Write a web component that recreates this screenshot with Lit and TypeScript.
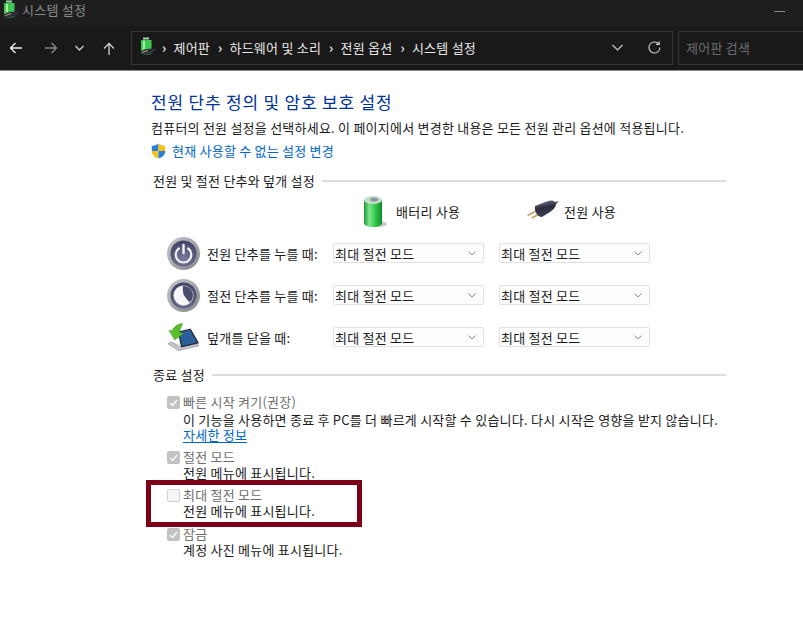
import { LitElement, css, html, svg } from 'lit'
import { customElement } from 'lit/decorators.js'

const batteryIcon = (w: number, h: number) => html`
  <svg width=${w} height=${h} viewBox="0 0 24 33">
    <defs>
      <linearGradient id="bat" x1="0" x2="1" y1="0" y2="0">
        <stop offset="0" stop-color="#1f9a35" />
        <stop offset="0.3" stop-color="#7fe58c" />
        <stop offset="0.65" stop-color="#2cc648" />
        <stop offset="1" stop-color="#168a2c" />
      </linearGradient>
    </defs>
    <ellipse cx="15" cy="29" rx="9" ry="3" fill="#c9c9c9" />
    <path d="M1 5v23c0 2.500 4 4 9 4s9-1.500 9-4V5z" fill="url(#bat)" />
    <ellipse cx="10" cy="5" rx="9" ry="4" fill="#c6dfca" />
    <ellipse cx="11" cy="4.500" rx="4" ry="2" fill="#8d97a5" />
  </svg>
`

const smallBattery = html`
  <svg width="18" height="20" viewBox="0 0 18 20">
    <rect x="4" y="0.500" width="6" height="2" fill="#9fd8a4" />
    <path d="M2 3h10.500v13c0 2-10.500 2-10.500 0z" fill="#3fc84f" />
    <path d="M4 4h2v11H4z" fill="#a4f0a8" />
    <path d="M1 15c3-3 8-4 14-3l2-2-1 4c-3 3-9 4-13 3z" fill="#2c2d3c" />
    <path d="M3 15.500l6-2" stroke="#c8a868" fill="none" />
  </svg>
`

const plugIcon = html`
  <svg width="32" height="22" viewBox="0 0 32 22">
    <defs>
      <linearGradient id="plug" x1="0" x2="0.300" y1="0" y2="1">
        <stop offset="0" stop-color="#7d8096" />
        <stop offset="0.5" stop-color="#2b2c3e" />
        <stop offset="1" stop-color="#3d3e52" />
      </linearGradient>
    </defs>
    <path d="M0.500 15.500l10-5M5 18l9-5" stroke="#c9a066" stroke-width="1.800" fill="none" />
    <path d="M8 6l13-5c3-1 6-.500 7 1L32 1l-3 3c0 3-3 6-6 8L15 17c-4 0-8-5-7-11z" fill="url(#plug)" />
  </svg>
`

const powerIcon = (inner: unknown) => html`
  <svg width="33" height="33" viewBox="0 0 33 33">
    <defs>
      <linearGradient id="ring" x1="0" x2="1" y1="0" y2="1">
        <stop offset="0" stop-color="#c9c9cc" />
        <stop offset="1" stop-color="#84848c" />
      </linearGradient>
      <radialGradient id="disc" cx="0.500" cy="0.700" r="0.700">
        <stop offset="0" stop-color="#7c7e9e" />
        <stop offset="1" stop-color="#3f4163" />
      </radialGradient>
    </defs>
    <circle cx="16.500" cy="16.500" r="16.500" fill="url(#ring)" />
    <circle cx="16.500" cy="16.500" r="13" fill="url(#disc)" />
    ${inner}
  </svg>
`

const powerGlyph = svg`
  <path d="M11.800 11.500a7.800 7.800 0 1 0 9.400 0" fill="none" stroke="#f4f4f8" stroke-width="2.200" stroke-linecap="round" />
  <path d="M16.500 8v8" stroke="#f4f4f8" stroke-width="2.400" stroke-linecap="round" />
`
const sleepGlyph = svg`
  <circle cx="16.500" cy="16.500" r="10" fill="#f6f6f8" />
  <path d="M16 7c5-.500 10 3.500 10 9 0 3-1.200 5.500-3.500 7.500C22 22 18 19 16.500 15 15.800 12 15.500 9.500 16 7z" fill="#4a4c70" />
`

const lidIcon = html`
  <svg width="34" height="31" viewBox="0 0 34 31">
    <path d="M1 22l11 7 21-5-3-2-16 3-10-5z" fill="#c4c6cc" stroke="#85878e" stroke-width="0.600" />
    <path d="M12 10l12-3 8 14-17 4z" fill="#2a5f9c" stroke="#23252f" stroke-width="1.300" stroke-linejoin="round" />
    <path d="M16 1c-5 .500-9 3-10.500 7.500L2 8l6 10 9-6.500-4-1.500c.500-3 2-6 3-9z" fill="#55c02c" stroke="#3a8f20" stroke-width="0.500" />
  </svg>
`

const shieldIcon = html`
  <svg width="15" height="16" viewBox="0 0 15 16">
    <path d="M7.500 0.500C5.500 2 3 2.800 0.800 2.800V8h6.700z" fill="#2a7fd6" />
    <path d="M7.500 0.500c2 1.500 4.500 2.300 6.700 2.300V8H7.500z" fill="#f5c21a" />
    <path d="M0.800 8h6.700v7.500C3.800 14.300 0.800 12 0.800 8z" fill="#f5c21a" />
    <path d="M7.500 8h6.700c0 4-3 6.300-6.700 7.500z" fill="#2a7fd6" />
  </svg>
`

const chevron = html`
  <svg class="chev" width="8" height="5" viewBox="0 0 8 5">
    <path d="M0.500 0.500l3.500 3.500 3.500-3.500" fill="none" stroke="#8a8a8a" />
  </svg>
`

@customElement('app-root')
export class AppRoot extends LitElement {
  private select() {
    return html`<div class="select"><span>최대 절전 모드</span>${chevron}</div>`
  }

  private row(icon: unknown, label: string) {
    return html`
      <div class="power-row">
        <div class="row-icon">${icon}</div>
        <div class="row-label">${label}</div>
        ${this.select()}${this.select()}
      </div>
    `
  }

  private option(title: string, desc: string, checked: boolean, more = false) {
    return html`
      <div class="option">
        <div class="check ${checked ? 'on' : ''}">
          ${checked
            ? html`<svg width="9" height="8" viewBox="0 0 9 8"><path d="M1 4l2.500 2.500L8 1" fill="none" stroke="#fff" stroke-width="1.200" /></svg>`
            : ''}
        </div>
        <div class="option-text">
          <div class="opt-title">${title}</div>
          <div class="opt-desc ${more ? 'long' : ''}">${desc}</div>
          ${more ? html`<a class="more">자세한 정보</a>` : ''}
        </div>
      </div>
    `
  }

  render() {
    return html`
      <header>
        <div class="titlebar">
          <span class="title-icon">${smallBattery}</span>
          <span class="title">시스템 설정</span>
          <span class="spacer"></span>
          <span class="minimize"></span>
        </div>
        <div class="navbar">
          <div class="nav-buttons">
            <svg width="14" height="12" viewBox="0 0 14 12"><path d="M13 6H1.500M6.500 1L1.500 6l5 5" fill="none" stroke="#f0f0f0" stroke-width="1.300" /></svg>
            <svg class="fwd" width="14" height="12" viewBox="0 0 14 12"><path d="M1 6h11.500M7.500 1l5 5-5 5" fill="none" stroke="#8b8b8b" stroke-width="1.300" /></svg>
            <svg class="down" width="9" height="6" viewBox="0 0 9 6"><path d="M0.500 1l4 4 4-4" fill="none" stroke="#d0d0d0" stroke-width="1.300" /></svg>
            <svg class="up" width="12" height="13" viewBox="0 0 12 13"><path d="M6 13V1.500M1 6.500l5-5 5 5" fill="none" stroke="#d0d0d0" stroke-width="1.300" /></svg>
          </div>
          <div class="address">
            <span class="addr-icon">${smallBattery}</span>
            <span class="sep first">›</span><span>제어판</span>
            <span class="sep">›</span><span>하드웨어 및 소리</span>
            <span class="sep">›</span><span>전원 옵션</span>
            <span class="sep">›</span><span>시스템 설정</span>
            <span class="spacer"></span>
            <svg class="addr-down" width="11" height="7" viewBox="0 0 11 7"><path d="M0.500 1l5 5 5-5" fill="none" stroke="#d0d0d0" stroke-width="1.100" /></svg>
            <svg class="refresh" width="13" height="13" viewBox="0 0 13 13"><path d="M10.800 3A5.500 5.500 0 1 0 12 6.500" fill="none" stroke="#d0d0d0" stroke-width="1.100" /><path d="M11.200 0.300V3.400H8" fill="none" stroke="#d0d0d0" stroke-width="1.100" /></svg>
          </div>
          <div class="search">제어판 검색</div>
        </div>
      </header>
      <main>
        <h1>전원 단추 정의 및 암호 보호 설정</h1>
        <p class="intro">컴퓨터의 전원 설정을 선택하세요. 이 페이지에서 변경한 내용은 모든 전원 관리 옵션에 적용됩니다.</p>
        <div class="uac">${shieldIcon}<a>현재 사용할 수 없는 설정 변경</a></div>
        <div class="group-head g1"><span>전원 및 절전 단추와 덮개 설정</span><i></i></div>
        <div class="col-heads">
          <div class="col-head bat">${batteryIcon(24, 33)}<span>배터리 사용</span></div>
          <div class="col-head plug">${plugIcon}<span>전원 사용</span></div>
        </div>
        <div class="rows">
          ${this.row(powerIcon(powerGlyph), '전원 단추를 누를 때:')}
          ${this.row(powerIcon(sleepGlyph), '절전 단추를 누를 때:')}
          ${this.row(lidIcon, '덮개를 닫을 때:')}
        </div>
        <div class="group-head g2"><span>종료 설정</span><i></i></div>
        <div class="options">
          ${this.option('빠른 시작 켜기(권장)', '이 기능을 사용하면 종료 후 PC를 더 빠르게 시작할 수 있습니다. 다시 시작은 영향을 받지 않습니다.', true, true)}
          ${this.option('절전 모드', '전원 메뉴에 표시됩니다.', true)}
          ${this.option('최대 절전 모드', '전원 메뉴에 표시됩니다.', false)}
          ${this.option('잠금', '계정 사진 메뉴에 표시됩니다.', true)}
        </div>
      </main>
      <div class="highlight"></div>
    `
  }

  static styles = css`
    :host {
      display: block;
      position: relative;
      height: 639px;
      overflow: hidden;
      background: #fff;
      color: #1a1a1a;
      font-family: 'Noto Sans CJK KR', sans-serif;
      font-size: 13px;
      letter-spacing: 0.23px;
    }
    header {
      background: #1a1a1a;
      border-bottom: 1px solid #8a8a8a;
    }
    .titlebar {
      display: flex;
      align-items: center;
      height: 26px;
      box-sizing: border-box;
      padding-bottom: 7px;
      background: #1e1e1e;
      color: #8a8a8a;
    }
    .title-icon {
      display: flex;
      margin: 0 2px 0 2px;
    }
    .spacer {
      flex: 1;
    }
    .minimize {
      width: 11px;
      height: 1px;
      background: #8a8a8a;
      margin: 3px 18px 0 0;
    }
    .navbar {
      display: flex;
      align-items: center;
      height: 44px;
      background: #191919;
    }
    .nav-buttons {
      display: flex;
      align-items: center;
      width: 131px;
      padding-left: 9px;
      box-sizing: border-box;
    }
    .fwd {
      margin-left: 21px;
    }
    .down {
      margin-left: 17px;
    }
    .up {
      margin-left: 19px;
    }
    .address {
      display: flex;
      align-items: center;
      width: 542px;
      height: 34px;
      box-sizing: border-box;
      border: 1px solid #363636;
      padding: 0 0 2px 7px;
      color: #e8e8e8;
      gap: 5px;
      white-space: nowrap;
    }
    .addr-icon {
      display: flex;
    }
    .sep {
      color: #e8e8e8;
      font-weight: 700;
      margin: 0 2px 0 3px;
    }
    .sep.first {
      margin-left: 0;
    }
    .addr-down {
      margin-right: 20px;
    }
    .refresh {
      margin-right: 11px;
    }
    .search {
      margin-left: 5px;
      flex: 1;
      height: 34px;
      box-sizing: border-box;
      border: 1px solid #363636;
      border-right: none;
      padding-left: 7px;
      line-height: 32px;
      color: #6e6e6e;
    }
    main {
      padding-left: 151px;
    }
    h1 {
      margin: 20px 0 0;
      font-size: 17px;
      line-height: 22px;
      font-weight: 400;
      color: #003399;
      letter-spacing: 0.8px;
    }
    .intro {
      margin: 6px 0 0;
      line-height: 18px;
      white-space: nowrap;
    }
    .uac {
      display: flex;
      align-items: center;
      gap: 6px;
      margin-top: 5px;
      line-height: 18px;
    }
    .uac a {
      color: #0066cc;
    }
    .group-head {
      display: flex;
      align-items: center;
      width: 575px;
      gap: 7px;
      padding-left: 2px;
      box-sizing: border-box;
      line-height: 18px;
    }
    .group-head i {
      flex: 1;
      height: 2px;
      background: #dcdcdc;
    }
    .g1 {
      margin-top: 12px;
    }
    .g2 {
      margin-top: 8px;
    }
    .col-heads {
      display: flex;
      align-items: center;
      height: 36px;
      margin-top: 3px;
      padding-left: 212px;
    }
    .col-head {
      display: flex;
      align-items: center;
    }
    .bat {
      width: 164px;
      gap: 9px;
    }
    .plug {
      gap: 5px;
    }
    .rows {
      margin-top: 3px;
    }
    .power-row {
      display: flex;
      align-items: center;
      height: 42px;
      padding-left: 16px;
    }
    .row-icon {
      display: flex;
      justify-content: center;
      width: 33px;
    }
    .row-label {
      width: 133px;
      padding-left: 7px;
      box-sizing: border-box;
      white-space: nowrap;
    }
    .select {
      display: flex;
      align-items: center;
      justify-content: space-between;
      width: 151px;
      height: 20px;
      box-sizing: border-box;
      margin-right: 15px;
      padding: 0 7px 0 1px;
      border: 1px solid #e1e1e1;
      border-radius: 2px;
      background: #fdfdfd;
    }
    .options {
      margin-top: 9px;
      padding-left: 16px;
      display: flex;
      flex-direction: column;
      gap: 5px;
    }
    .option {
      display: flex;
      gap: 3px;
    }
    .option:last-child {
      margin-top: 1px;
    }
    .check {
      width: 13px;
      height: 13px;
      box-sizing: border-box;
      margin-top: 3px;
      border-radius: 2px;
      border: 1px solid #d0d0d0;
      background: #f6f6f6;
      display: flex;
      align-items: center;
      justify-content: center;
    }
    .check.on {
      background: #c2c2c2;
      border-color: #c2c2c2;
    }
    .opt-title {
      color: #6e6e6e;
      line-height: 17px;
    }
    .opt-desc {
      line-height: 16px;
      white-space: nowrap;
    }
    .opt-desc.long {
      margin-top: 2px;
    }
    .more {
      display: block;
      width: fit-content;
      line-height: 14px;
      color: #0066cc;
      border-bottom: 1px solid #0066cc;
    }
    .highlight {
      position: absolute;
      left: 146px;
      top: 480px;
      width: 216px;
      height: 47px;
      box-sizing: border-box;
      border: 5px solid #7b0018;
    }
  `
}

declare global {
  interface HTMLElementTagNameMap {
    'app-root': AppRoot
  }
}
